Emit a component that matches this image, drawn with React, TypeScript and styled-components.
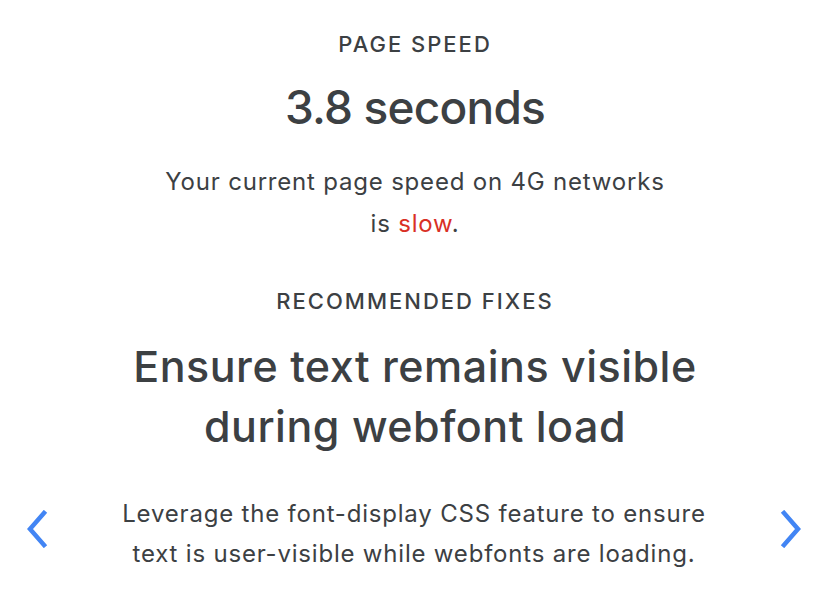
import styled, { createGlobalStyle } from "styled-components";

const GlobalStyle = createGlobalStyle`
  html, body {
    margin: 0;
    padding: 0;
    background: #ffffff;
  }
  body {
    font-family: Inter, Roboto, Arial, sans-serif;
    color: #3c4043;
  }
`;

const Page = styled.main`
  width: 830px;
  display: flex;
  flex-direction: column;
  align-items: center;
  padding-top: 26px;
  text-align: center;
`;

const Section = styled.section`
  display: flex;
  flex-direction: column;
  align-items: center;
  & + & {
    margin-top: 38px;
  }
`;

const Eyebrow = styled.h3`
  margin: 0;
  font-size: 22px;
  font-weight: 500;
  letter-spacing: 2px;
  line-height: 36px;
  text-transform: uppercase;
  color: #3c4043;
`;

const Stat = styled.div`
  margin-top: 17px;
  font-size: 46px;
  font-weight: 500;
  letter-spacing: -0.8px;
  line-height: 56px;
  color: #3c4043;
`;

const Summary = styled.p`
  margin: 26px 0 0;
  width: 515px;
  font-size: 24px;
  letter-spacing: 0.8px;
  line-height: 42px;
  color: #3c4043;
`;

const Slow = styled.span`
  color: #d93025;
`;

const Headline = styled.h2`
  margin: 17px 0 0;
  width: 620px;
  font-size: 43px;
  font-weight: 500;
  letter-spacing: 0.5px;
  line-height: 60px;
  color: #3c4043;
`;

const Carousel = styled.div`
  width: 830px;
  display: flex;
  align-items: center;
  justify-content: space-between;
  margin-top: 38px;
  padding: 0 26px 0 24px;
  box-sizing: border-box;
`;

const Description = styled.p`
  margin: 0;
  width: 600px;
  font-size: 24px;
  letter-spacing: 0.8px;
  line-height: 40px;
  color: #3c4043;
`;

const ArrowButton = styled.button`
  border: none;
  background: none;
  padding: 0;
  margin-bottom: 10px;
  width: 26px;
  height: 40px;
  display: flex;
  align-items: center;
  justify-content: center;
  cursor: pointer;
  color: #4285f4;
`;

const Chevron = ({ dir }: { dir: "left" | "right" }) => (
  <svg width="24" height="38" viewBox="0 0 24 38" fill="none">
    <path
      d={dir === "left" ? "M19 3 L5 19 L19 35" : "M5 3 L19 19 L5 35"}
      stroke="currentColor"
      strokeWidth="4.5"
      strokeLinecap="square"
      strokeLinejoin="miter"
    />
  </svg>
);

export default function App() {
  return (
    <>
      <GlobalStyle />
      <Page>
        <Section>
          <Eyebrow>Page speed</Eyebrow>
          <Stat>3.8 seconds</Stat>
          <Summary>
            Your current page speed on 4G networks is <Slow>slow</Slow>.
          </Summary>
        </Section>
        <Section>
          <Eyebrow>Recommended fixes</Eyebrow>
          <Headline>Ensure text remains visible during webfont load</Headline>
          <Carousel>
            <ArrowButton aria-label="Previous">
              <Chevron dir="left" />
            </ArrowButton>
            <Description>
              Leverage the font-display CSS feature to ensure text is
              user-visible while webfonts are loading.
            </Description>
            <ArrowButton aria-label="Next">
              <Chevron dir="right" />
            </ArrowButton>
          </Carousel>
        </Section>
      </Page>
    </>
  );
}
